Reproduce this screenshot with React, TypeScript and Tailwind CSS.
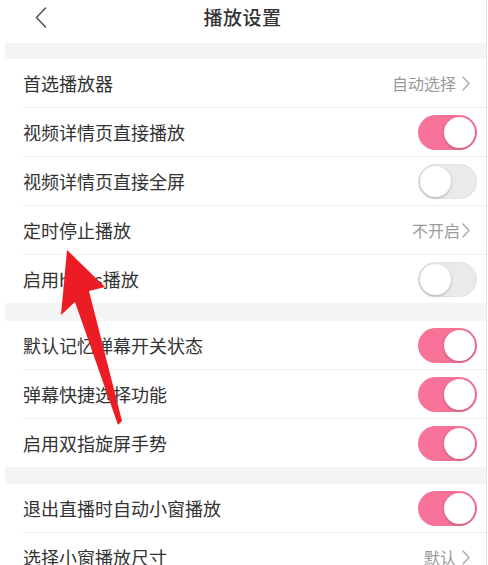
import { ReactNode } from "react";

type Row = {
  label: string;
  value?: string;
  gap?: boolean;
  on?: boolean;
};

const groups: Row[][] = [
  [
    { label: "首选播放器", value: "自动选择", gap: true },
    { label: "视频详情页直接播放", on: true },
    { label: "视频详情页直接全屏", on: false },
    { label: "定时停止播放", value: "不开启", gap: false },
    { label: "启用https播放", on: false },
  ],
  [
    { label: "默认记忆弹幕开关状态", on: true },
    { label: "弹幕快捷选择功能", on: true },
    { label: "启用双指旋屏手势", on: true },
  ],
  [
    { label: "退出直播时自动小窗播放", on: true },
    { label: "选择小窗播放尺寸", value: "默认", gap: true },
  ],
];

function Chevron() {
  return (
    <svg width="8" height="15" viewBox="0 0 8 15" fill="none" className="shrink-0">
      <path d="M1 1l6 6.5L1 14" stroke="#a8a8a8" strokeWidth="1.3" strokeLinecap="round" strokeLinejoin="round" />
    </svg>
  );
}

function Toggle({ on }: { on: boolean }) {
  return (
    <div
      className={
        on
          ? "relative w-[59px] h-[35px] rounded-full bg-[#f97398]"
          : "relative w-[59px] h-[35px] rounded-full bg-[#eaeaea] border border-[#e2e2e2]"
      }
    >
      <div
        className={
          on
            ? "absolute top-[2px] right-[2px] w-[31px] h-[31px] rounded-full bg-white shadow-[0_1px_3px_rgba(0,0,0,0.25)]"
            : "absolute top-[1px] left-[1px] w-[31px] h-[31px] rounded-full bg-white shadow-[0_1px_3px_rgba(0,0,0,0.25)]"
        }
      />
    </div>
  );
}

function SettingRow({ row, last }: { row: Row; last: boolean }) {
  let right: ReactNode = null;
  if (row.value !== undefined) {
    right = (
      <div className={row.gap ? "flex items-center gap-[6px] text-[16px] text-[#9a9a9a]" : "flex items-center gap-[2px] text-[16px] text-[#9a9a9a]"}>
        <span>{row.value}</span>
        <Chevron />
      </div>
    );
  } else {
    right = <Toggle on={!!row.on} />;
  }
  return (
    <div className="pl-[17px]">
      <div
        className={
          last
            ? "h-[48px] flex items-center justify-between pr-[9px]"
            : "h-[49px] flex items-center justify-between pr-[9px] border-b border-[#efefef]"
        }
      >
        <span className="pl-[1px] text-[18px] text-[#333333]">{row.label}</span>
        <div className={row.value !== undefined ? "pr-[7px]" : ""}>{right}</div>
      </div>
    </div>
  );
}

export default function App() {
  const bandHeights = ["h-[16px]", "h-[18px]", "h-[17px]"];
  return (
    <div
      className="relative w-[488px] h-[565px] overflow-hidden bg-white"
      style={{ fontFamily: '"Noto Sans CJK SC", "Noto Sans", sans-serif' }}
    >
      <div className="ml-[5px] w-[482px] h-full border-r border-[#e3e3e3]">
        {/* Header */}
        <div className="relative h-[43px] flex items-start justify-center pt-[3px]">
          <svg width="12" height="21" viewBox="0 0 12 21" fill="none" className="absolute left-[30px] top-[7px]">
            <path d="M10.5 1L1.5 10.5l9 9.5" stroke="#555555" strokeWidth="1.6" strokeLinecap="round" strokeLinejoin="round" />
          </svg>
          <span className="text-[19px] leading-[28px] font-medium text-[#333333] tracking-[0.5px] -ml-[6px]">播放设置</span>
        </div>

        {groups.map((g, gi) => (
          <div key={gi}>
            <div className={`${bandHeights[gi]} bg-[#f4f4f4]`} />
            {g.map((row, ri) => (
              <SettingRow key={row.label} row={row} last={ri === g.length - 1} />
            ))}
          </div>
        ))}
      </div>

      {/* Red annotation arrow */}
      <svg className="absolute left-0 top-0 pointer-events-none" width="488" height="565" viewBox="0 0 488 565">
        <polygon
          points="67,250 105,287 89,291 122,421 118,425 75,302 61,315"
          fill="#ec1c24"
        />
      </svg>
    </div>
  );
}
